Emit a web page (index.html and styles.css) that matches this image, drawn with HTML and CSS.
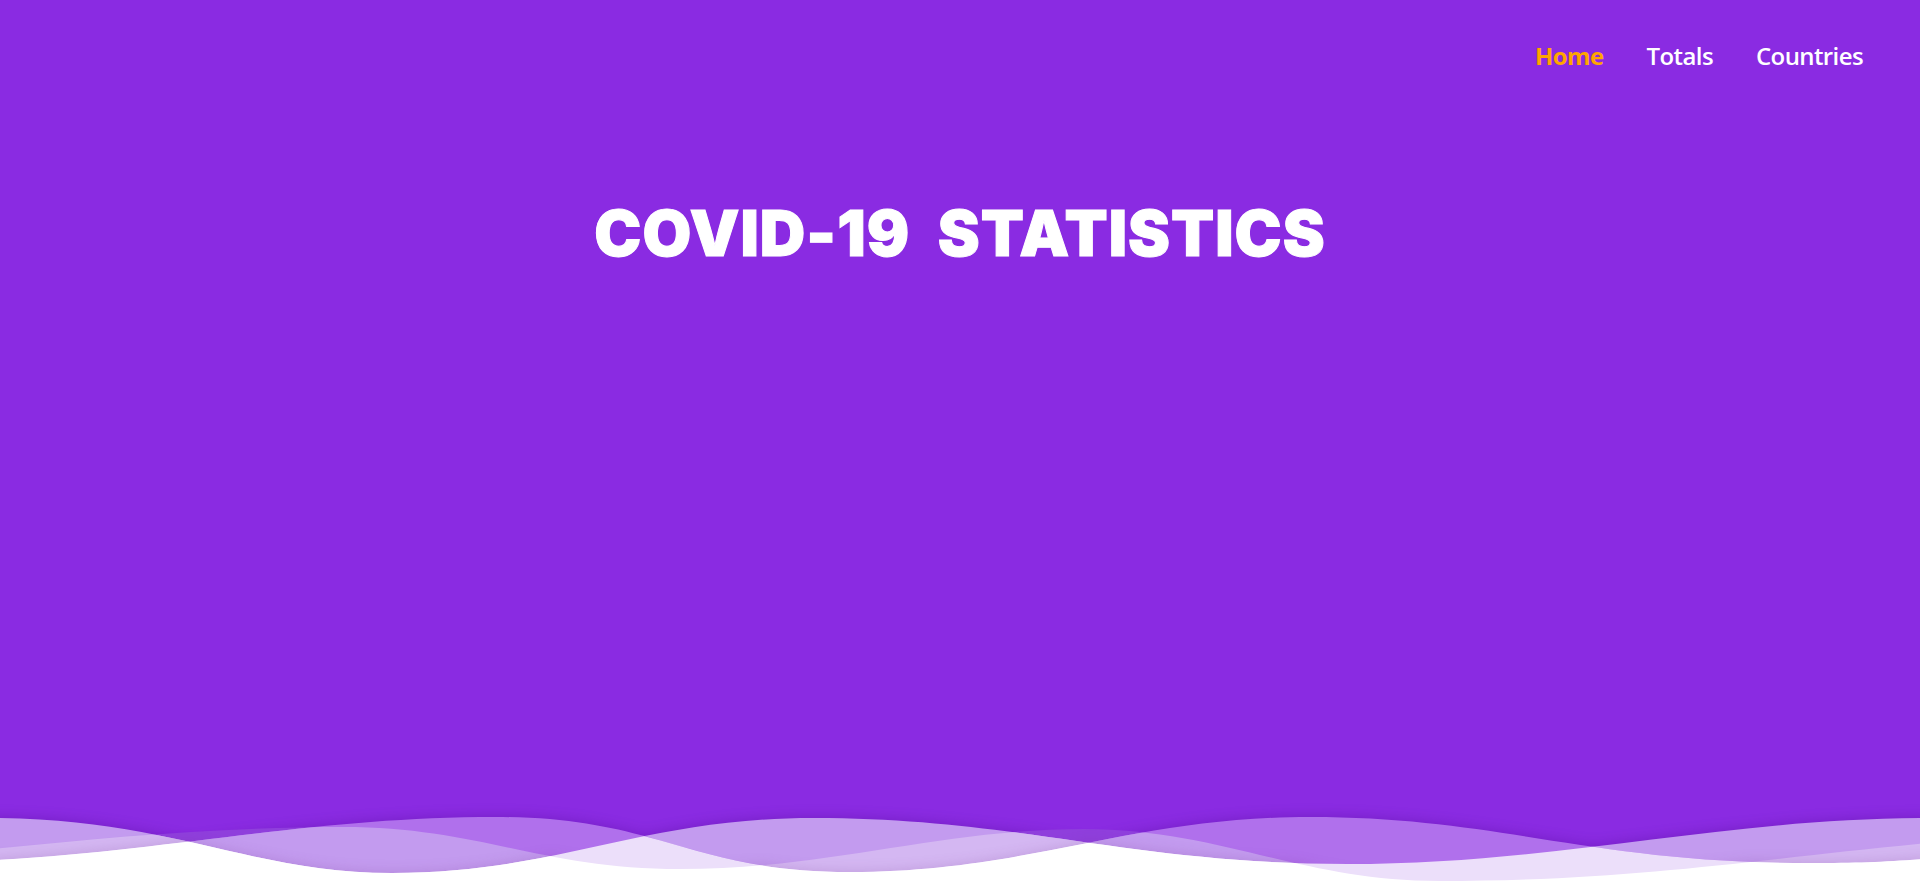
FILE: index.html
```html
<!DOCTYPE html>
<html lang="en">
<head>
  <meta charset="UTF-8">
  <meta name="viewport" content="width=device-width, initial-scale=1.0">
  <title>COVID-19 Statistics</title>
  <link rel="stylesheet" href="styles.css">
</head>
<body>

  <nav class="nav">
    <a class="nav-link active" href="#">Home</a>
    <a class="nav-link" href="#">Totals</a>
    <a class="nav-link" href="#">Countries</a>
  </nav>

  <h1 class="title">COVID-19 STATISTICS</h1>

  <!-- three wave layers, each overlap gets its own colour -->
  <svg class="waves" viewBox="0 786 1920 110" preserveAspectRatio="none" aria-hidden="true">
    <defs>
      <path id="wave-a" d="M-10,818 C170,818 250,873 392,873 C560,873 640,818 814,818 C1020,818 1130,864 1347,864 C1560,864 1720,818 1930,818 L1930,900 L-10,900 Z"/>
      <path id="wave-b" d="M-110,863 C130,863 280,817 496,817 C660,817 690,872 850,872 C1030,872 1130,817 1310,817 C1500,817 1590,863 1810,863 C1870,863 1900,861 1960,856 L1960,900 L-110,900 Z"/>
      <path id="wave-c" d="M-481,881 C-160,881 60,827 343,827 C480,827 540,869 680,869 C830,869 940,829 1084,829 C1220,829 1300,881 1439,881 C1640,881 1760,858 1960,840 L1960,900 L-481,900 Z"/>
      <clipPath id="clip-a"><use href="#wave-a"/></clipPath>
      <clipPath id="clip-b"><use href="#wave-b"/></clipPath>
      <filter id="soft" filterUnits="userSpaceOnUse" x="-100" y="760" width="2120" height="160">
        <feGaussianBlur stdDeviation="7"/>
      </filter>
    </defs>

    <g class="shade" filter="url(#soft)">
      <use href="#wave-a"/>
      <use href="#wave-b"/>
    </g>

    <use class="only-c" href="#wave-c"/>
    <use class="only-a" href="#wave-a"/>
    <use class="only-b" href="#wave-b"/>
    <g clip-path="url(#clip-a)"><use class="a-c" href="#wave-c"/></g>
    <g clip-path="url(#clip-b)"><use class="b-c" href="#wave-c"/></g>

    <g class="shade-inner" filter="url(#soft)">
      <g clip-path="url(#clip-a)"><g clip-path="url(#clip-b)"><use href="#wave-c"/></g></g>
    </g>

    <g clip-path="url(#clip-a)"><use class="a-b" href="#wave-b"/></g>
    <g clip-path="url(#clip-a)"><g clip-path="url(#clip-b)"><use class="a-b-c" href="#wave-c"/></g></g>
  </svg>

</body>
</html>
```

FILE: styles.css
```css
* {
  box-sizing: border-box;
}

html, body {
  height: 100%;
}

body {
  margin: 0;
  background-color: #8a2be2;
  display: flex;
  flex-direction: column;
  overflow: hidden;
}

.nav {
  display: flex;
  justify-content: flex-end;
  gap: 43px;
  padding: 38px 57px 0 0;
}

.nav-link {
  font-family: "Open Sans", sans-serif;
  font-size: 24px;
  font-weight: 600;
  line-height: 36px;
  letter-spacing: -0.6px;
  color: #fff;
  text-decoration: none;
}

.nav-link.active {
  color: #ffa500;
  font-weight: 700;
}

.title {
  margin: 119px 0 0;
  font-family: Inter, sans-serif;
  font-size: 63px;
  font-weight: 900;
  line-height: 80px;
  letter-spacing: 1px;
  word-spacing: 14px;
  text-align: center;
  color: #fff;
  -webkit-text-stroke: 1px #fff;
}

.waves {
  display: block;
  width: 100%;
  height: 110px;
  margin-top: auto;
  flex-shrink: 0;
}

.shade {
  fill: #3c0a78;
  opacity: 0.3;
}

.shade-inner {
  fill: #6a2a80;
  opacity: 0.2;
}

.only-a { fill: #c39bef; }
.only-b { fill: #b070ec; }
.only-c { fill: #8f3fdc; }
.a-b { fill: #ecdffa; }
.a-c { fill: #d4b7f2; }
.b-c { fill: #c39bef; }
.a-b-c { fill: #fff; }
```
